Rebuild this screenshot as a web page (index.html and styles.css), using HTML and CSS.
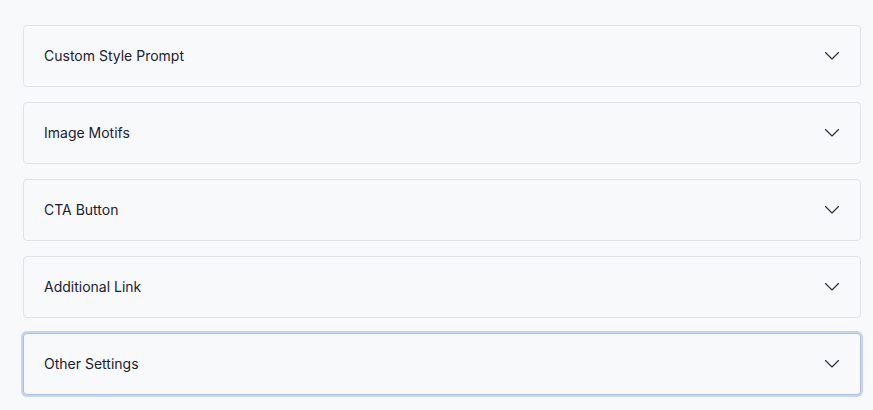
FILE: index.html
```html
<html>
<head>
<meta http-equiv="content-type" content="text/html; charset=utf-8">
<meta name="viewport" content="width=device-width, initial-scale=1">
<link rel="stylesheet" href="styles.css">
<title>Settings</title>
</head>
<body>
<div class=panel>
<div class=sect><span class=label>Custom Style Prompt</span>
<svg class=chev viewBox="0 0 16 16"><path d="M1.5 4.5 8 11l6.5-6.5"/></svg></div>
<div class=sect><span class=label>Image Motifs</span>
<svg class=chev viewBox="0 0 16 16"><path d="M1.5 4.5 8 11l6.5-6.5"/></svg></div>
<div class=sect><span class=label>CTA Button</span>
<svg class=chev viewBox="0 0 16 16"><path d="M1.5 4.5 8 11l6.5-6.5"/></svg></div>
<div class=sect><span class=label>Additional Link</span>
<svg class=chev viewBox="0 0 16 16"><path d="M1.5 4.5 8 11l6.5-6.5"/></svg></div>
<div class="sect focus"><span class=label>Other Settings</span>
<svg class=chev viewBox="0 0 16 16"><path d="M1.5 4.5 8 11l6.5-6.5"/></svg></div>
</div>
</body>
</html>
```
FILE: styles.css
```css
html{background:#f8f9fb}
body{margin:0;font-family:Inter,"Noto Sans",sans-serif;color:#1c2130}
.panel{display:flex;flex-direction:column;gap:15px;padding:25px 12px 0 23px}
.sect{display:flex;align-items:center;justify-content:space-between;height:60px;padding:0 20px;
border:1px solid #e1e3e8;border-radius:4px;background:#f8f9fb}
.label{font-size:14px;font-weight:400;line-height:20px}
.chev{width:16px;height:16px;fill:none;stroke:#2b303b;stroke-width:1.15;stroke-linecap:round;stroke-linejoin:round}
.focus{border-color:#aebfe0;box-shadow:0 0 0 2px #c7d4ed}
```
